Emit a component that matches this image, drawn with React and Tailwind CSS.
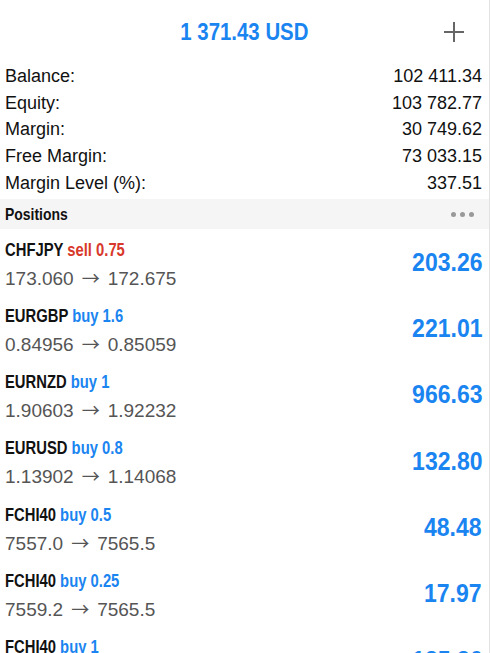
const summary = [
  ["Balance:", "102 411.34"],
  ["Equity:", "103 782.77"],
  ["Margin:", "30 749.62"],
  ["Free Margin:", "73 033.15"],
  ["Margin Level (%):", "337.51"],
];

const positions = [
  { symbol: "CHFJPY", side: "sell", volume: "0.75", open: "173.060", current: "172.675", profit: "203.26" },
  { symbol: "EURGBP", side: "buy", volume: "1.6", open: "0.84956", current: "0.85059", profit: "221.01" },
  { symbol: "EURNZD", side: "buy", volume: "1", open: "1.90603", current: "1.92232", profit: "966.63" },
  { symbol: "EURUSD", side: "buy", volume: "0.8", open: "1.13902", current: "1.14068", profit: "132.80" },
  { symbol: "FCHI40", side: "buy", volume: "0.5", open: "7557.0", current: "7565.5", profit: "48.48" },
  { symbol: "FCHI40", side: "buy", volume: "0.25", open: "7559.2", current: "7565.5", profit: "17.97" },
  { symbol: "FCHI40", side: "buy", volume: "1", open: "7550.1", current: "7565.5", profit: "125.36" },
];

// condensed bold look: Liberation Sans Bold squeezed horizontally
const bold = "font-['Liberation_Sans',Arial,sans-serif] font-bold";

function PositionRow({ p }) {
  return (
    <div className="flex h-[66.3px] shrink-0 items-center justify-between pl-[5px] pr-[7px]">
      <div className="flex flex-col pt-[2px]">
        <div className="h-[26px] leading-[26px]">
          <span className={`${bold} inline-block origin-left scale-x-[0.8] whitespace-nowrap text-[18.5px] text-[#111]`}>
            {p.symbol}{" "}
            <span className={p.side === "sell" ? "text-[#d8382b]" : "text-[#1a84f0]"}>
              {p.side} {p.volume}
            </span>
          </span>
        </div>
        <div className="h-[28px] whitespace-nowrap font-['Liberation_Sans',Arial,sans-serif] text-[19px] leading-[28px] text-[#555]">
          {p.open}
          <span className="mx-[8px] font-['Noto_Sans_CJK_JP',sans-serif] text-[18px]">→</span>
          {p.current}
        </div>
      </div>
      <span className={`${bold} inline-block origin-right scale-x-[0.92] text-[25px] text-[#1a84f0]`}>{p.profit}</span>
    </div>
  );
}

export default function App() {
  return (
    <div className="flex h-[653px] w-[490px] flex-col overflow-hidden border-r border-[#e2e2e2] bg-white">
      {/* Header */}
      <div className="relative flex h-[63px] shrink-0 items-center justify-center">
        <span className={`${bold} inline-block scale-x-[0.85] text-[24px] text-[#1a84f0]`}>1 371.43 USD</span>
        <svg className="absolute left-[444px] top-[22px]" width="20" height="20" viewBox="0 0 20 20">
          <path d="M10 0v20M0 10h20" stroke="#666" strokeWidth="2" />
        </svg>
      </div>

      {/* Account summary */}
      <div className="flex shrink-0 flex-col pb-[3px] pl-[5px] pr-[7px] font-['Liberation_Sans',Arial,sans-serif] text-[18px] text-[#111]">
        {summary.map(([label, value]) => (
          <div key={label} className="flex h-[26.7px] items-center justify-between">
            <span>{label}</span>
            <span>{value}</span>
          </div>
        ))}
      </div>

      {/* Positions header */}
      <div className="flex h-[30px] shrink-0 items-center justify-between bg-[#f5f5f5] pl-[5px] pr-[15px]">
        <span className={`${bold} inline-block origin-left scale-x-[0.82] text-[17px] text-[#111]`}>Positions</span>
        <div className="flex gap-[4px]">
          <span className="h-[5px] w-[5px] rounded-full bg-[#999]" />
          <span className="h-[5px] w-[5px] rounded-full bg-[#999]" />
          <span className="h-[5px] w-[5px] rounded-full bg-[#999]" />
        </div>
      </div>

      {/* Positions list */}
      {positions.map((p, i) => (
        <PositionRow key={i} p={p} />
      ))}
    </div>
  );
}
